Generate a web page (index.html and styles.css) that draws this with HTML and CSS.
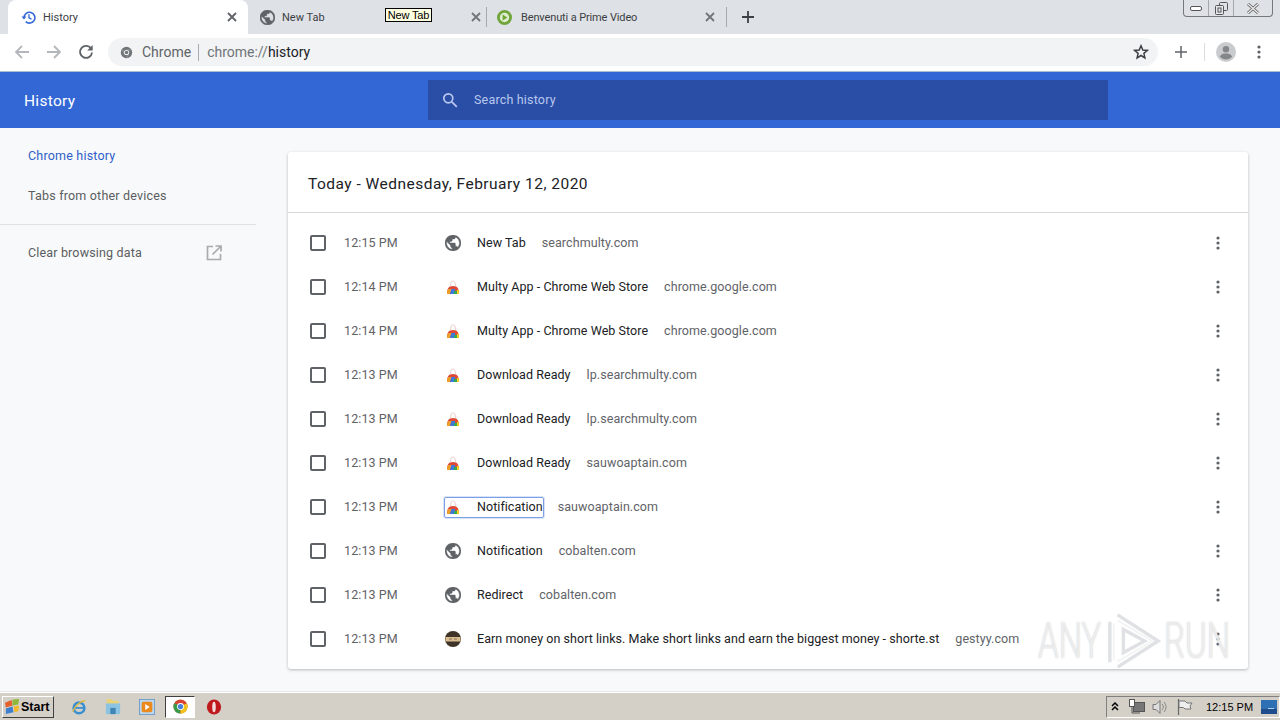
FILE: index.html
```html
<!DOCTYPE html>
<html lang="en">
<head>
<meta charset="utf-8">
<title>History</title>
<link rel="stylesheet" href="styles.css">
</head>
<body>
<svg class="defs" width="0" height="0" aria-hidden="true">
  <defs>
    <symbol id="globe" viewBox="2 2 20 20">
      <path d="M12 2C6.48 2 2 6.48 2 12s4.48 10 10 10 10-4.48 10-10S17.52 2 12 2zm-1 17.930c-3.950-.49-7-3.850-7-7.930 0-.62.08-1.210.21-1.790L9 15v1c0 1.100.9 2 2 2v1.930zm6.900-2.540c-.26-.81-1-1.390-1.900-1.390h-1v-3c0-.55-.45-1-1-1H8v-2h2c.55 0 1-.45 1-1V7h2c1.100 0 2-.9 2-2v-.41c2.930 1.190 5 4.060 5 7.410 0 2.080-.8 3.970-2.100 5.390z" fill="#5f6368" stroke="#5f6368" stroke-width=".5"/>
    </symbol>
    <symbol id="rainbow" viewBox="0 0 16 16">
      <path d="M5.500 7C5.500 3.500 6.500 2 8 2s2.500 1.500 2.500 5" fill="none" stroke="#ecd6d6" stroke-width="1.200"/>
      <path d="M2 15c0-4.500 1-8 6-8s6 3.500 6 8z" fill="#dc4a38"/>
      <path d="M2 15c0-2.500.5-4.200 1.500-5h3L5 15z" fill="#f0a02a"/>
      <path d="M5 15l1.500-5h3.500v5z" fill="#3b78e0"/>
      <path d="M8.500 15l.8-3H12l.5 3z" fill="#34a853"/>
      <path d="M12 15v-4l1.400-.5c.4 1 .6 2.700.6 4.500z" fill="#f4d21f"/>
    </symbol>
    <symbol id="more" viewBox="0 0 16 16">
      <circle cx="8" cy="3" r="1.600" fill="#5f6368"/>
      <circle cx="8" cy="8" r="1.600" fill="#5f6368"/>
      <circle cx="8" cy="13" r="1.600" fill="#5f6368"/>
    </symbol>
    <symbol id="close" viewBox="0 0 10 10">
      <path d="M1 1l8 8M9 1l-8 8" stroke="#5f6368" stroke-width="1.800" fill="none"/>
    </symbol>
  </defs>
</svg>

<div class="strip">
  <div class="tab tab-active">
    <svg class="fav" viewBox="0 0 16 16"><path d="M3.200 8a5.800 5.800 0 1 1 1.800 4.400" fill="none" stroke="#3367d6" stroke-width="1.700"/><path d="M0.500 7h5.200L3.200 10.200z" fill="#3367d6"/><path d="M8.500 4.500V8.300l2.700 1.500" fill="none" stroke="#3367d6" stroke-width="1.400"/></svg>
    <span class="tab-title">History</span>
    <svg class="x"><use href="#close"/></svg>
  </div>
  <div class="tab tab-second">
    <svg class="fav"><use href="#globe"/></svg>
    <span class="tab-title">New Tab</span>
    <svg class="x"><use href="#close"/></svg>
  </div>
  <i class="tab-sep"></i>
  <div class="tab tab-third">
    <svg class="fav" viewBox="0 0 16 16"><circle cx="8" cy="8" r="8" fill="#6fa53a"/><circle cx="8" cy="8" r="5" fill="#dfeccf"/><path d="M6 4.800l5 3.200-5 3.200z" fill="#69a52f"/></svg>
    <span class="tab-title">Benvenuti a Prime Video</span>
    <svg class="x"><use href="#close"/></svg>
  </div>
  <i class="tab-sep"></i>
  <svg class="newtab" viewBox="0 0 12 12"><path d="M6 0v12M0 6h12" stroke="#3c4043" stroke-width="1.800"/></svg>
  <div class="tooltip">New Tab</div>
  <div class="winctl">
    <div class="wc wc-min"><svg width="14" height="8" viewBox="0 0 14 8"><rect x="1.500" y="1.500" width="11" height="4" rx="1.500" fill="#fff" stroke="#555"/></svg></div>
    <div class="wc wc-max"><svg width="13" height="13" viewBox="0 0 13 13"><rect x="4.500" y="0.500" width="8" height="8" rx="1" fill="none" stroke="#555"/><rect x="0.500" y="3.500" width="8" height="9" rx="1" fill="#e4e6ea" stroke="#555"/><rect x="3" y="6" width="3" height="4" fill="none" stroke="#555"/></svg></div>
    <div class="wc wc-close"><svg width="14" height="11" viewBox="0 0 14 11"><path d="M2 1l10 9M12 1L2 10" stroke="#666" stroke-width="3"/><path d="M2 1l10 9M12 1L2 10" stroke="#eee" stroke-width="1.200"/></svg></div>
  </div>
</div>

<div class="toolbar">
  <svg class="nav" viewBox="0 0 16 16"><path d="M15 8H2M8 2L2 8l6 6" fill="none" stroke="#b4b7bb" stroke-width="1.800"/></svg>
  <svg class="nav" viewBox="0 0 16 16"><path d="M1 8h13M8 2l6 6-6 6" fill="none" stroke="#b4b7bb" stroke-width="1.800"/></svg>
  <svg class="nav nav-reload" viewBox="0 0 16 16"><path d="M13.300 5A6 6 0 1 0 14 8.500" fill="none" stroke="#5f6368" stroke-width="1.900"/><path d="M14.700 1v5.500H9.200z" fill="#5f6368"/></svg>
  <div class="omnibox">
    <svg class="chip-icon" viewBox="0 0 16 16"><circle cx="8" cy="8" r="7" fill="#70757a"/><circle cx="8" cy="8" r="3.200" fill="#fff"/><circle cx="8" cy="8" r="2.200" fill="#70757a"/><path d="M8 4.800h6M5.200 9.500L2.500 4M10.800 9.500L8 15" stroke="#a8abaf" stroke-width=".8"/></svg>
    <span class="chip">Chrome</span>
    <span class="url"><span class="url-dim">chrome://</span>history</span>
    <svg class="star" viewBox="0 0 16 16"><path d="M8 1.800l1.800 4.200 4.600.4-3.500 3 1 4.500L8 11.500l-3.900 2.400 1-4.500-3.500-3 4.600-.4z" fill="none" stroke="#3c4043" stroke-width="1.500"/></svg>
  </div>
  <svg class="tool-plus" viewBox="0 0 12 12"><path d="M6 0v12M0 6h12" stroke="#5f6368" stroke-width="1.500"/></svg>
  <i class="tool-sep"></i>
  <svg class="avatar" viewBox="0 0 20 20"><circle cx="10" cy="10" r="10" fill="#c9cbcd"/><circle cx="10" cy="7.300" r="3.200" fill="#84878a"/><path d="M3.800 14.500c1.500-2.500 3.500-3 6.200-3s4.700.5 6.200 3c-1.500 2-3.800 3-6.200 3s-4.700-1-6.200-3z" fill="#84878a"/></svg>
  <svg class="tool-more"><use href="#more"/></svg>
</div>

<header class="hist-head">
  <div class="hist-title">History</div>
  <div class="search">
    <svg class="search-icon" viewBox="0 0 16 16"><circle cx="6.300" cy="6.300" r="4.500" fill="none" stroke="#b9c8ee" stroke-width="1.700"/><path d="M9.800 9.800l5 5" stroke="#b9c8ee" stroke-width="1.800"/></svg>
    <span class="search-text">Search history</span>
  </div>
</header>

<main class="page">
  <nav class="side">
    <div class="side-item side-current">Chrome history</div>
    <div class="side-item side-second">Tabs from other devices</div>
    <hr class="side-rule">
    <div class="side-clear">
      <span>Clear browsing data</span>
      <svg class="ext" viewBox="0 0 16 16"><path d="M7 1.500H1.500v13h13V9" fill="none" stroke="#a9abad" stroke-width="1.700"/><path d="M9.500 1h5.500v5.500M15 1L6.500 9.500" fill="none" stroke="#a9abad" stroke-width="1.700"/></svg>
    </div>
  </nav>
  <section class="card">
    <h2 class="card-title">Today - Wednesday, February 12, 2020</h2>
    <div class="rows">
      <div class="row"><i class="check"></i><span class="time">12:15 PM</span><span class="icon-box"><svg class="site"><use href="#globe"/></svg></span><span class="title">New Tab</span><span class="domain">searchmulty.com</span><svg class="row-more"><use href="#more"/></svg></div>
      <div class="row"><i class="check"></i><span class="time">12:14 PM</span><span class="icon-box"><svg class="site"><use href="#rainbow"/></svg></span><span class="title">Multy App - Chrome Web Store</span><span class="domain">chrome.google.com</span><svg class="row-more"><use href="#more"/></svg></div>
      <div class="row"><i class="check"></i><span class="time">12:14 PM</span><span class="icon-box"><svg class="site"><use href="#rainbow"/></svg></span><span class="title">Multy App - Chrome Web Store</span><span class="domain">chrome.google.com</span><svg class="row-more"><use href="#more"/></svg></div>
      <div class="row"><i class="check"></i><span class="time">12:13 PM</span><span class="icon-box"><svg class="site"><use href="#rainbow"/></svg></span><span class="title">Download Ready</span><span class="domain">lp.searchmulty.com</span><svg class="row-more"><use href="#more"/></svg></div>
      <div class="row"><i class="check"></i><span class="time">12:13 PM</span><span class="icon-box"><svg class="site"><use href="#rainbow"/></svg></span><span class="title">Download Ready</span><span class="domain">lp.searchmulty.com</span><svg class="row-more"><use href="#more"/></svg></div>
      <div class="row"><i class="check"></i><span class="time">12:13 PM</span><span class="icon-box"><svg class="site"><use href="#rainbow"/></svg></span><span class="title">Download Ready</span><span class="domain">sauwoaptain.com</span><svg class="row-more"><use href="#more"/></svg></div>
      <div class="row"><i class="check"></i><span class="time">12:13 PM</span><span class="focus-wrap"><span class="icon-box"><svg class="site"><use href="#rainbow"/></svg></span><span class="title">Notification</span></span><span class="domain">sauwoaptain.com</span><svg class="row-more"><use href="#more"/></svg></div>
      <div class="row"><i class="check"></i><span class="time">12:13 PM</span><span class="icon-box"><svg class="site"><use href="#globe"/></svg></span><span class="title">Notification</span><span class="domain">cobalten.com</span><svg class="row-more"><use href="#more"/></svg></div>
      <div class="row"><i class="check"></i><span class="time">12:13 PM</span><span class="icon-box"><svg class="site"><use href="#globe"/></svg></span><span class="title">Redirect</span><span class="domain">cobalten.com</span><svg class="row-more"><use href="#more"/></svg></div>
      <div class="row"><i class="check"></i><span class="time">12:13 PM</span><span class="icon-box"><svg class="site" viewBox="0 0 16 16"><circle cx="8" cy="8" r="8" fill="#3e3428"/><path d="M0.500 6h15v4.500H.5z" fill="#d9bd90"/><path d="M4 8h3M9 8h3" stroke="#8a7352" stroke-width="1"/></svg></span><span class="title">Earn money on short links. Make short links and earn the biggest money - shorte.st</span><span class="domain">gestyy.com</span><svg class="row-more"><use href="#more"/></svg></div>
    </div>
  </section>
</main>

<div class="watermark">
  <span class="wm-any">ANY</span>
  <svg class="wm-logo" viewBox="0 0 60 64"><path d="M4 12v42M12 5l42 27-42 27M18 20l22 12-22 12z" fill="none" stroke="#dfe1e4" stroke-width="3.500"/><path d="M8 14v38M12 11l36 21-36 21" fill="none" stroke="#f4f4f5" stroke-width="2"/></svg>
  <span class="wm-run">RUN</span>
</div>

<footer class="taskbar">
  <div class="start">
    <svg class="start-flag" viewBox="0 0 18 18"><path d="M1 5l7-3 1 6-7 2z" fill="#e5602c"/><path d="M9 1.500l7-.5-1 6-6 1z" fill="#8fb83a"/><path d="M2 11l7-2 1 6-8 2z" fill="#3f7fd0"/><path d="M10 9l6-1-1 6-4 1z" fill="#f2b92c"/></svg>
    <span>Start</span>
  </div>
  <svg class="tb-icon tb-ie" viewBox="0 0 18 18"><circle cx="9" cy="10" r="6" fill="none" stroke="#3a8fd0" stroke-width="3"/><path d="M4 10h10" stroke="#3a8fd0" stroke-width="2"/><path d="M2 14C5 7 11 2 16 2" fill="none" stroke="#e2b93a" stroke-width="1.500"/></svg>
  <svg class="tb-icon tb-folder" viewBox="0 0 18 18"><path d="M2 0h5l2 2h6v6H2z" fill="#e8d27a"/><path d="M1 5h16v12H1z" fill="#8cc3e0"/><path d="M6 10h6v7H6z" fill="#3f86b5"/></svg>
  <svg class="tb-icon tb-media" viewBox="0 0 18 18"><rect x="0.500" y="0.500" width="17" height="17" fill="#bcd6ee" stroke="#6a9cc8"/><rect x="3" y="3" width="12" height="12" rx="2" fill="#ea8a1f"/><path d="M7 5.500l5 3.500-5 3.500z" fill="#fff"/></svg>
  <div class="tb-active">
    <svg class="tb-chrome" viewBox="0 0 16 16"><circle cx="8" cy="8" r="7.500" fill="#d8432f"/><path d="M8 8L1.500 4.200A7.500 7.500 0 0 0 8 15.500z" fill="#3a9b4a"/><path d="M8 8l6.700-3.500A7.500 7.500 0 0 1 8 15.500z" fill="#f2c21f"/><circle cx="8" cy="8" r="3.700" fill="#fff"/><circle cx="8" cy="8" r="2.800" fill="#4a80dc"/></svg>
  </div>
  <svg class="tb-icon tb-opera" viewBox="0 0 18 18"><ellipse cx="9" cy="9" rx="8" ry="8.500" fill="#c0191c"/><ellipse cx="9" cy="9" rx="2" ry="6" fill="#f3dcdc"/></svg>
  <div class="tray">
    <svg class="tray-up" viewBox="0 0 8 10"><path d="M1 4l3-3 3 3M1 8l3-3 3 3" fill="none" stroke="#000" stroke-width="1.500"/></svg>
    <svg class="tray-net" viewBox="0 0 16 16"><rect x="4.500" y="3.500" width="11" height="9" fill="#777" stroke="#555"/><rect x="0.500" y="0.500" width="5" height="7" fill="#fff" stroke="#555"/><path d="M3 8v6h8" fill="none" stroke="#555"/></svg>
    <svg class="tray-vol" viewBox="0 0 16 16"><path d="M1 5.500h3l4-4v13l-4-4H1z" fill="#ddd" stroke="#777"/><path d="M10 5a4 4 0 0 1 0 6M12 3a7 7 0 0 1 0 10" fill="none" stroke="#888"/></svg>
    <svg class="tray-flag" viewBox="0 0 16 16"><path d="M1.500 0v16" stroke="#666" stroke-width="1.200"/><path d="M2 2h6l2 2h5l-2 3 1 3H8L6.500 8.500H2z" fill="#eee" stroke="#777"/></svg>
    <span class="clock">12:15 PM</span>
    <svg class="tray-desk" viewBox="0 0 16 14"><rect width="16" height="14" fill="#2f6fb4"/><rect y="9" width="16" height="5" fill="#1d4e8b"/><rect x="7" y="8" width="6" height="1" fill="#a9d0f0"/></svg>
  </div>
</footer>
</body>
</html>
```
FILE: styles.css
```css
* { box-sizing: border-box; }
html, body { margin: 0; padding: 0; }
body {
  width: 1280px;
  height: 720px;
  overflow: hidden;
  position: relative;
  display: flex;
  flex-direction: column;
  font-family: Roboto, "Liberation Sans", sans-serif;
  font-size: 13px;
  color: #202124;
  background: #f8f9fa;
}
.defs { position: absolute; }
svg { display: block; flex: none; }

.strip {
  height: 34px;
  background: #dee1e6;
  display: flex;
  align-items: center;
  padding-left: 8px;
  position: relative;
}
.tab {
  height: 34px;
  display: flex;
  align-items: center;
  font-size: 11px;
  color: #3c4043;
}
.tab-active {
  width: 240px;
  background: #fff;
  border-radius: 8px 8px 0 0;
  padding: 0 0 0 13px;
}
.tab-second { width: 238px; padding-left: 12px; }
.tab-third { width: 239px; padding-left: 10px; }
.fav { width: 15px; height: 15px; }
.tab-title { margin-left: 7px; flex: 1; white-space: nowrap; }
.tab-third .tab-title { margin-left: 9px; letter-spacing: -.13px; }
.x { width: 10px; height: 10px; }
.tab-active .x { margin-right: 11px; }
.tab-second .x { margin-right: 5px; opacity: .85; }
.tab-third .x { margin-right: 11px; opacity: .85; }
.tab-sep { width: 1px; height: 20px; background: #a6a9ad; }
.newtab { width: 12px; height: 12px; margin-left: 15px; }
.tooltip {
  position: absolute;
  left: 385px;
  top: 8px;
  width: 47px;
  height: 14px;
  background: #ffffe1;
  border: 1px solid #000;
  font: 11px/12px "Liberation Sans", sans-serif;
  letter-spacing: -.15px;
  color: #000;
  text-align: center;
}
.winctl {
  position: absolute;
  right: 7px;
  top: 0;
  width: 90px;
  height: 17px;
  display: flex;
  border: 1px solid #75797f;
  border-top: 0;
  border-radius: 0 0 4px 4px;
}
.wc { display: flex; align-items: center; justify-content: center; border-right: 1px solid #a4a7ab; }
.wc-min { width: 25px; padding-top: 2px; }
.wc-max { width: 25px; }
.wc-close { flex: 1; border-right: 0; }

.toolbar {
  height: 38px;
  background: #fff;
  border-bottom: 1px solid #a6bfd2;
  display: flex;
  align-items: center;
  padding: 0 0 1px 14px;
}
.nav { width: 16px; height: 16px; }
.nav + .nav { margin-left: 16px; }
.nav-reload { margin-left: 16px; }
.omnibox {
  width: 1050px;
  height: 28px;
  margin-left: 14px;
  background: #f1f3f4;
  border-radius: 14px;
  display: flex;
  align-items: center;
  padding: 0 9px 0 12px;
  font-size: 14px;
}
.chip-icon { width: 13px; height: 13px; }
.chip {
  color: #5f6368;
  margin-left: 9px;
  padding-right: 7px;
  border-right: 1px solid #a9abae;
  line-height: 17px;
}
.url { margin-left: 8px; flex: 1; color: #202124; }
.url-dim { color: #70757a; }
.star { width: 16px; height: 16px; }
.tool-plus { width: 12px; height: 12px; margin-left: 17px; }
.tool-sep { width: 1px; height: 18px; background: #dadce0; margin-left: 17px; }
.avatar { width: 20px; height: 20px; margin-left: 11px; }
.tool-more { width: 16px; height: 16px; margin-left: 15px; }

.hist-head {
  height: 56px;
  background: #3367d6;
  display: flex;
  align-items: center;
  position: relative;
  padding-left: 24px;
}
.hist-title { width: 404px; padding-top: 2px; color: #fff; font-size: 15.500px; letter-spacing: .3px; }
.search {
  width: 680px;
  height: 40px;
  background: #2a4ea6;
  display: flex;
  align-items: center;
  padding-left: 14px;
}
.search-icon { width: 16px; height: 16px; margin-bottom: 1px; }
.search-text { margin-left: 16px; padding-bottom: 2px; font-size: 12.500px; color: #b9c8ee; letter-spacing: .18px; }

.page { flex: 1; min-height: 0; display: flex; background: #f8f9fa; border-bottom: 1px solid #e6e7e8; }
.side { width: 256px; flex: none; padding-top: 8px; }
.side-item {
  height: 40px;
  line-height: 40px;
  padding-left: 28px;
  font-size: 12.500px;
  color: #5a5d61;
  letter-spacing: .2px;
}
.side-current { color: #2f60c8; }
.side-rule { height: 1px; border: 0; background: #e0e1e3; margin: 8px 0 7px; }
.side-clear {
  height: 40px;
  display: flex;
  align-items: center;
  justify-content: space-between;
  padding: 0 34px 0 28px;
  font-size: 12.500px;
  color: #5a5d61;
  letter-spacing: .16px;
}
.ext { width: 16px; height: 16px; margin-top: 1px; }

.card {
  width: 960px;
  height: 517px;
  margin: 24px 0 0 32px;
  background: #fff;
  border-radius: 3px;
  box-shadow: 0 1px 3px rgba(60, 64, 67, .35);
}
.card-title {
  margin: 0;
  height: 61px;
  line-height: 64px;
  padding-left: 20px;
  font-size: 15.500px;
  font-weight: 400;
  letter-spacing: .48px;
  color: #202124;
  border-bottom: 1px solid #d5d7d9;
}
.rows { padding-top: 8px; }
.row {
  height: 44px;
  display: flex;
  align-items: center;
  padding-left: 22px;
  position: relative;
  white-space: nowrap;
}
.check {
  width: 16px;
  height: 16px;
  border: 2px solid #5f6368;
  border-radius: 2px;
  flex: none;
}
.time { width: 101px; margin-left: 18px; padding-bottom: 2px; flex: none; color: #5f6368; font-size: 12.500px; letter-spacing: .1px; }
.icon-box { width: 32px; display: flex; align-items: center; flex: none; }
.site { width: 16px; height: 16px; }
.title { padding-bottom: 2px; color: #202124; font-size: 12.500px; letter-spacing: .05px; }
.domain { margin-left: 16px; padding-bottom: 2px; color: #5f6368; font-size: 12.500px; letter-spacing: .08px; }
.row-more { width: 16px; height: 16px; position: absolute; left: 922px; top: 14px; }
.focus-wrap {
  display: flex;
  align-items: center;
  height: 21px;
  margin: 0 -2px 0 -1px;
  padding: 0 1px;
  border: 1px solid #7d9fe6;
  border-radius: 2px;
  box-shadow: 0 0 0 1px #d6e3fa;
}
.focus-wrap .icon-box { margin-left: -1px; }
.focus-wrap .title { margin-right: -1px; }

.watermark {
  position: absolute;
  left: 1038px;
  top: 610px;
  width: 196px;
  height: 62px;
  display: flex;
  align-items: center;
  font-size: 50px;
  font-weight: 300;
  line-height: 62px;
  color: rgba(250, 250, 250, .7);
  text-shadow: 0 0 2px #c4c6ca;
  pointer-events: none;
}
.watermark span { display: block; transform: scaleX(.66); transform-origin: left center; }
.wm-any { width: 68px; }
.wm-logo { width: 58px; height: 62px; }
.wm-run { width: 62px; }

.taskbar {
  height: 28px;
  flex: none;
  background: #d4d0c8;
  border-top: 1px solid #fff;
  display: flex;
  align-items: center;
  padding: 0 0 0 2px;
}
.start {
  width: 52px;
  height: 22px;
  display: flex;
  align-items: center;
  gap: 0;
  padding-left: 1px;
  background: #d4d0c8;
  border: 1px solid;
  border-color: #fff #404040 #404040 #fff;
  font: bold 12.500px "Liberation Sans", sans-serif;
  color: #000;
}
.start-flag { width: 17px; height: 17px; }
.tb-icon { width: 16px; height: 16px; }
.tb-ie { margin-left: 17px; }
.tb-folder { margin-left: 18px; }
.tb-media { margin-left: 18px; }
.tb-active {
  width: 30px;
  height: 22px;
  margin-left: 10px;
  background: #fff;
  border: 1px solid;
  border-color: #404040 #fff #fff #404040;
  display: flex;
  align-items: center;
  justify-content: center;
}
.tb-chrome { width: 15px; height: 15px; }
.tb-opera { margin-left: 11px; }
.tray {
  margin-left: auto;
  width: 174px;
  height: 22px;
  display: flex;
  align-items: center;
  border: 1px solid;
  border-color: #808080 #fff #fff #808080;
  padding-left: 4px;
}
.tray-up { width: 8px; height: 10px; }
.tray-net { width: 16px; height: 16px; margin-left: 10px; }
.tray-vol { width: 16px; height: 16px; margin-left: 7px; }
.tray-flag { width: 16px; height: 16px; margin-left: 9px; }
.clock { margin-left: 13px; font: 11px "Liberation Sans", sans-serif; color: #000; width: 55px; white-space: nowrap; }
.tray-desk { width: 16px; height: 14px; }
```
